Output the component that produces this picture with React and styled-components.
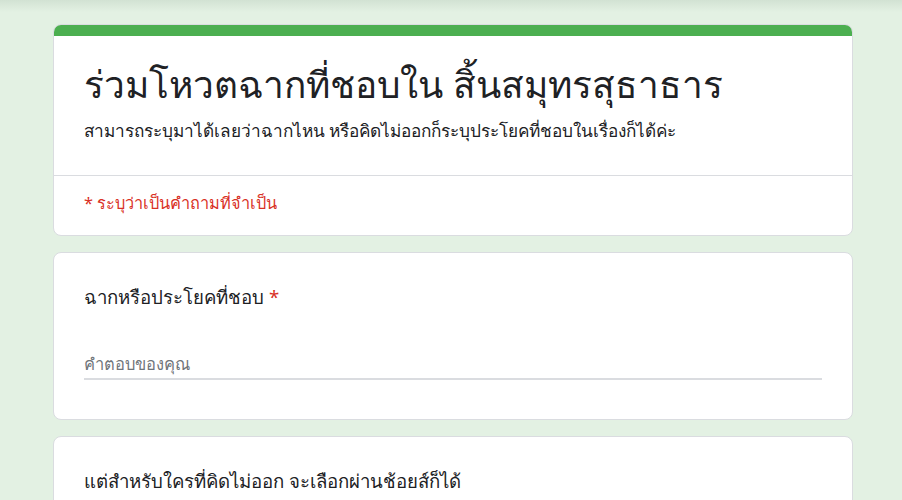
import styled, { createGlobalStyle } from "styled-components";

const GlobalStyle = createGlobalStyle`
  html, body {
    margin: 0;
    padding: 0;
  }
  body {
    background: #e3f1e3;
    font-family: "Noto Sans", "DejaVu Sans", sans-serif;
    color: #202124;
  }
`;

const Page = styled.div`
  min-height: 500px;
  padding: 24px 49px 40px 53px;
  box-sizing: border-box;
  background: linear-gradient(to bottom, #d2e2d3 0px, #e3f1e3 12px);
`;

const Column = styled.div`
  width: 800px;
  display: flex;
  flex-direction: column;
  gap: 16px;
`;

const Card = styled.div`
  background: #fff;
  border: 1px solid #dadce0;
  border-radius: 8px;
  overflow: hidden;
  box-sizing: border-box;
`;

const TopBar = styled.div`
  height: 12px;
  background: #4caf50;
  margin: -1px -1px 0;
`;

const Header = styled.div`
  padding: 24px 30px 32px;
  border-bottom: 1px solid #dadce0;
`;

const Title = styled.h1`
  margin: 0;
  font-size: 37px;
  font-weight: 500;
  line-height: 48px;
  color: #202124;
`;

const Description = styled.p`
  margin: 11px 0 0;
  font-size: 17.2px;
  line-height: 24px;
  color: #202124;
`;

const RequiredNote = styled.div`
  padding: 15px 30px 20px;
  font-size: 16.3px;
  line-height: 24px;
  color: #d93025;
`;

const Question = styled.div`
  padding: 32px 30px 39px;
`;

const QuestionTitle = styled.div`
  font-size: 18.6px;
  line-height: 24px;
  color: #202124;
`;

const Star = styled.span`
  color: #d93025;
  margin-left: 5px;
`;

const AnswerInput = styled.input`
  display: block;
  margin-top: 41px;
  width: 738px;
  box-sizing: border-box;
  border: none;
  border-bottom: 2px solid #dadce0;
  padding: 4px 0 4px;
  font-family: inherit;
  font-size: 16.5px;
  line-height: 20px;
  color: #202124;
  background: transparent;
  outline: none;
  &::placeholder {
    color: #70757a;
  }
`;

export default function App() {
  return (
    <>
      <GlobalStyle />
      <Page>
        <Column>
          <Card>
            <TopBar />
            <Header>
              <Title>ร่วมโหวตฉากที่ชอบใน สิ้นสมุทรสุธาธาร</Title>
              <Description>
                สามารถระบุมาได้เลยว่าฉากไหน หรือคิดไม่ออกก็ระบุประโยคที่ชอบในเรื่องก็ได้ค่ะ
              </Description>
            </Header>
            <RequiredNote>* ระบุว่าเป็นคำถามที่จำเป็น</RequiredNote>
          </Card>
          <Card>
            <Question>
              <QuestionTitle>
                ฉากหรือประโยคที่ชอบ<Star>*</Star>
              </QuestionTitle>
              <AnswerInput placeholder="คำตอบของคุณ" />
            </Question>
          </Card>
          <Card>
            <Question>
              <QuestionTitle>แต่สำหรับใครที่คิดไม่ออก จะเลือกผ่านช้อยส์ก็ได้</QuestionTitle>
            </Question>
          </Card>
        </Column>
      </Page>
    </>
  );
}
